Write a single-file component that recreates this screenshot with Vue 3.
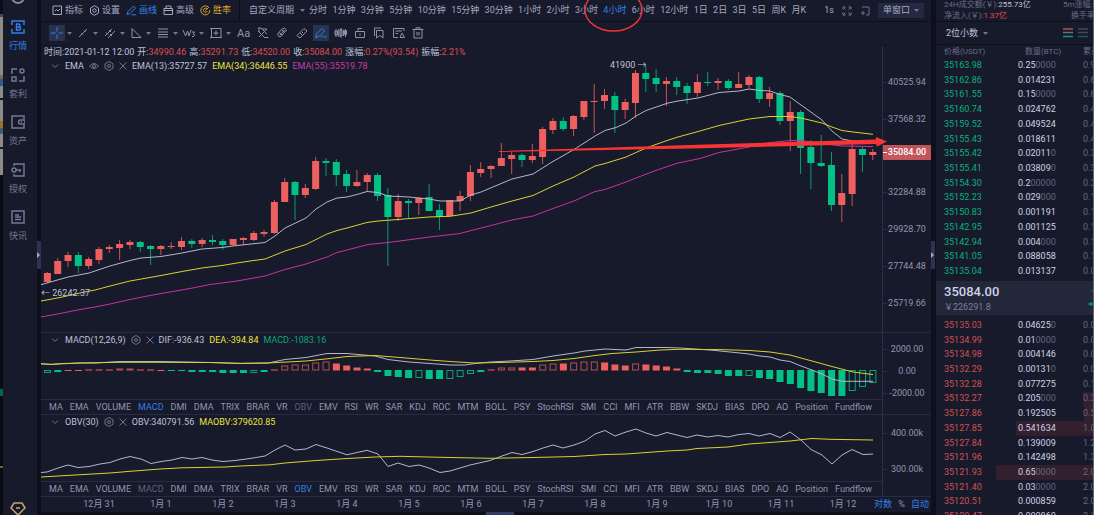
<script setup>
import { ref } from 'vue'

const FIRST = 47.4
const PITCH = 10.317
const xAt = (i) => FIRST + i * PITCH

// direction, body top, body bottom, wick top, wick bottom
const candles = [
  ['r', 273, 282, 272, 283], ['r', 261, 274, 258, 274], ['r', 255, 261, 252, 267], ['g', 255, 266, 252, 273],
  ['r', 259, 266, 257, 269], ['r', 249, 260, 247, 264], ['r', 247, 249, 245, 253], ['r', 244, 248, 240, 260],
  ['r', 242, 245, 240, 249], ['g', 242, 247, 241, 252], ['g', 246, 249, 245, 265], ['r', 246, 249, 245, 255],
  ['r', 246, 247, 242, 249], ['r', 241, 247, 237, 250], ['g', 241, 244, 239, 248], ['r', 240, 244, 238, 247],
  ['g', 240, 242, 235, 245], ['g', 241, 245, 239, 250], ['r', 239, 245, 239, 246], ['r', 238, 240, 237, 245],
  ['r', 233, 240, 231, 241], ['r', 232, 234, 230, 237], ['r', 202, 233, 200, 234], ['r', 182, 202, 178, 202],
  ['g', 182, 195, 181, 220], ['r', 188, 195, 184, 198], ['r', 161, 189, 157, 190], ['g', 161, 163, 158, 176],
  ['g', 162, 175, 159, 186], ['g', 174, 186, 170, 192], ['r', 182, 186, 170, 187], ['r', 175, 182, 173, 191],
  ['g', 175, 196, 173, 201], ['g', 195, 217, 188, 266], ['r', 201, 217, 194, 221], ['g', 201, 203, 199, 218],
  ['r', 198, 203, 197, 215], ['g', 197, 211, 184, 211], ['g', 210, 217, 204, 230], ['r', 200, 216, 200, 216],
  ['r', 196, 201, 191, 211], ['r', 172, 196, 165, 201], ['r', 169, 173, 162, 177], ['r', 166, 169, 165, 178],
  ['r', 158, 166, 143, 166], ['r', 155, 159, 152, 174], ['g', 155, 160, 153, 167], ['r', 156, 160, 144, 163],
  ['r', 129, 157, 127, 164], ['r', 121, 130, 118, 134], ['g', 121, 129, 117, 131], ['r', 116, 129, 115, 136],
  ['r', 101, 117, 101, 120], ['r', 101, 102, 84, 133], ['r', 95, 101, 89, 109], ['g', 96, 110, 92, 133],
  ['r', 102, 110, 99, 119], ['r', 73, 103, 70, 118], ['g', 73, 79, 66, 92], ['g', 78, 84, 69, 92],
  ['r', 81, 84, 77, 106], ['g', 81, 87, 77, 95], ['g', 86, 93, 83, 104], ['r', 82, 93, 74, 97],
  ['g', 82, 83, 72, 86], ['r', 81, 83, 78, 90], ['g', 81, 88, 79, 90], ['r', 84, 88, 72, 88],
  ['r', 77, 85, 75, 88], ['g', 77, 99, 76, 103], ['r', 93, 99, 87, 107], ['g', 93, 121, 91, 125],
  ['r', 112, 121, 101, 151], ['g', 112, 148, 110, 174], ['g', 147, 163, 140, 189], ['g', 163, 166, 135, 167],
  ['g', 165, 205, 152, 211], ['r', 193, 205, 174, 222], ['r', 149, 194, 144, 206], ['g', 149, 155, 147, 172],
  ['r', 152, 155, 149, 160],
]

const ema13 = '41,284.7 47,283 68,277 89,273 110,266 130,260.5 141,258 161,256.5 182,253 202,249 222,247.5 237,245.5 265,242.5 275,236 285,228 306,218 316,209 327,202 337,198 347,197 357,194.5 367,191.5 378,192.5 388,196 409,197 429,199 440,201 460,201 471,195 481,192 512,179 533,174 552,162 574,149.5 595,136 605,130.5 616,127.5 626,123 636,116 646,110.5 668,103 678,101 698,98 719,92.5 739,91 749,89 760,90.5 770,91 780,94.5 790,97 801,105 822,120 832,131 842,139 853,141 873,142'
const ema34 = '41,301 60,297.5 80,293 95,290 110,286 130,281 161,275.5 182,271.5 202,268 222,265.5 237,263 250,261 265,259 285,251 306,244.5 316,239.5 327,234 337,230.5 347,228 367,222.5 378,221 398,219.5 429,217 450,216.3 471,213 491,207 512,201 533,195.5 553,186 574,177 595,166 605,163.5 626,157 646,148 667,140.5 678,137 700,131 719,125.5 749,119 770,116.5 790,116.5 801,118 822,123 832,127 842,130.5 853,132 873,134.3'
const ema55 = '41,317 60,313.5 80,309.5 95,307 110,304 130,299.5 150,295.5 170,292 190,288.5 210,284.5 237,281 265,276 285,269.5 306,264 327,257 337,252.5 347,250 368,244.5 388,242.5 430,237 460,233.5 471,230.5 491,225.5 512,220 533,216 553,208.5 574,201 595,191.5 605,189.5 626,182 636,178 657,170 678,163 700,158.5 719,152.5 749,147 770,142.5 790,140.5 801,140.5 822,143.5 842,146 873,146.5'

const dif = '41,363.5 51,364.5 62,363.5 80,363 95,363 120,361.5 160,361.5 210,362.5 240,363.5 268,363 285,359.5 306,357.5 327,353.5 347,353.5 375,356 388,359.5 409,362 430,363.5 450,365 465,365 475,363.5 490,362 510,361 533,359.5 553,356 574,353 585,351 605,349 626,350 636,347.5 667,347.5 680,348 710,350 740,353 749,354 760,356 770,357 780,360 790,361.5 801,366 812,370 822,374 832,379 842,381.3 873,381.3'
const dea = '41,364 51,364.3 80,363 120,362.3 160,362.3 210,362.5 240,363.3 268,363 306,361 330,358.5 347,356.5 375,355.5 400,357.5 430,360 450,361.5 475,363 500,362.5 533,361.5 553,360.5 574,358.5 595,355.5 612,353.5 636,352 660,350 680,349.3 720,349.6 750,350.5 770,352 790,355 812,361 832,366.5 853,372 873,374.5'

// signed bar height in chart units, second value marks an outlined bar
const macd = [
  [-3, 1], [-2], [-1], [-1], [1], [1], [1], [2, 1], [2, 1], [1], [1], [-1], [-1], [-1], [-2], [-2], [-2], [-3], [-3], [-3],
  [-3, 1], [-2], [1], [5, 1], [6, 1], [6, 1], [8, 1], [9, 1], [7], [5], [3], [2], [-2], [-6], [-7], [-8], [-8, 1], [-9],
  [-9], [-9, 1], [-7, 1], [-4, 1], [-2], [1], [3, 1], [3, 1], [3], [3], [6, 1], [7, 1], [7], [8, 1], [9, 1], [9, 1], [8],
  [6], [5], [7, 1], [6], [5], [4], [2], [-2], [-3], [-3], [-4], [-6], [-6], [-6, 1], [-8], [-9], [-12], [-14], [-18],
  [-21], [-23], [-26], [-26], [-21, 1], [-17, 1], [-13, 1],
]
const redUnder = new Set([2, 3, 11])
const bars = macd.map(([v, hollow], i) => {
  const red = v > 0 || redUnder.has(i)
  return { x: xAt(i) - 3.4, y: v > 0 ? 370.5 - v : 370, h: Math.abs(v), hollow: !!hollow, red }
})

const obv = '41,472.5 47,472 58,468 68,465 78,467.5 89,466.5 100,464 110,462.5 120,459 130,456.5 141,459 151,463.5 161,461.5 172,460 182,457.5 192,459 202,457.5 212,460 223,461.5 235,460.5 250,458.5 265,456 275,450 285,445 295,450 306,449 316,444.5 327,448 347,454.8 357,452.5 367,450.3 378,454 388,466.5 398,463 409,466.5 419,465 429,468 440,472.5 450,471 470,465 490,460.5 502,456 512,452.5 522,454.5 533,451.5 543,448 553,445 563,448 574,445 585,441 595,434 605,430.5 615,436 626,432 636,429 646,433 656,436 667,432.5 677,435 687,437.5 697,435 708,437 718,435.5 728,437 739,434.5 749,433.5 759,436 770,433.5 780,437.5 790,432 801,440 811,449.5 822,455 832,464 842,455 852,449.5 863,454.5 873,454'
const maobv = '41,477 75,475 110,473 130,471.3 160,469 182,467.8 225,467 240,466 270,464.8 285,463 316,460.5 347,458.5 375,457 400,456.3 440,457.3 490,458.3 533,457.5 574,456.5 605,454.5 626,454 667,451 687,450 697,448.5 728,447 749,444 770,442.5 790,441 812,438.5 830,439.3 873,440'

const periods = ['分时', '1分钟', '3分钟', '5分钟', '10分钟', '15分钟', '30分钟', '1小时', '2小时', '3小时', '4小时', '6小时', '12小时', '1日', '2日', '3日', '5日', '周K', '月K']
const period = ref('4小时')

const indicators = ['MA', 'EMA', 'VOLUME', 'MACD', 'DMI', 'DMA', 'TRIX', 'BRAR', 'VR', 'OBV', 'EMV', 'RSI', 'WR', 'SAR', 'KDJ', 'ROC', 'MTM', 'BOLL', 'PSY', 'StochRSI', 'SMI', 'CCI', 'MFI', 'ATR', 'BBW', 'SKDJ', 'BIAS', 'DPO', 'AO', 'Position', 'Fundflow']
const days = ['12月 31', '1月 1', '1月 2', '1月 3', '1月 4', '1月 5', '1月 6', '1月 7', '1月 8', '1月 9', '1月 10', '1月 11', '1月 12']

const priceTicks = ['40525.94', '37568.32', '34828.55', '32284.88', '29928.70', '27744.48', '25719.66']

const nav = [
  { name: '行情', paths: ['M5 1H1V5 M1 9V13H5 M9 1H13V5 M13 9V13H9', 'M5.500 4V10H8Q9.500 10 9.500 8.500Q9.500 7 8 7H5.500H8Q9 7 9 5.500Q9 4 7.500 4H5', 'M5 1H9 M5 13H9'] },
  { name: '套利', paths: ['M6 1H1V6', 'M1 9V13H5V9Z', 'M13 8V13H8', 'M11 1A2 2 0 1 0 11 5A2 2 0 1 0 11 1'] },
  { name: '资产', paths: ['M13 4V1H1V13H13V10', 'M14 5H9.500A2 2 0 0 0 9.500 9H14Z', 'M10 7H11'] },
  { name: '授权', paths: ['M3 3V1H13V13H3V11', 'M3 5A2 2 0 1 0 3 9A2 2 0 1 0 3 5', 'M5 7H10 M9 7V9'] },
  { name: '快讯', paths: ['M1 1H13V13H1Z', 'M4 5H8 M4 7H10 M4 9.500H10'] },
]

const menus = [
  { name: '指标', tone: '', paths: ['M1 1H9.500V9.500H1Z', 'M3 6L4.500 4.500L6 6L8 4'] },
  { name: '设置', tone: '', paths: ['M5.500 0.700L9.500 3V8L5.500 10.300L1.500 8V3Z', 'M5.500 3.800A1.700 1.700 0 1 0 5.500 7.200A1.700 1.700 0 1 0 5.500 3.800'] },
  { name: '画线', tone: 'blue', paths: ['M1 9.500L2 6.500L7.500 1L9.500 3L4 8.500Z', 'M5.500 9.800H10'] },
  { name: '高级', tone: '', paths: ['M1 3.500H9.500V9.500H1Z', 'M3 3V1H8V3', 'M1 5.500H9.500'] },
  { name: '胜率', tone: 'gold', paths: ['M8.500 2.200A4.500 4.500 0 1 0 9.800 5', 'M7 4A2 2 0 1 0 7.300 6', 'M5.300 5.500L9 2'] },
]

const drawTools = [
  { name: '十字光标', paths: ['M7 1V5.500 M7 8.500V13 M1 7H5.500 M8.500 7H13'] },
  { name: '线段', paths: ['M3 11L11 3', 'M5.500 7L7 8.500 M8 4.500L9.500 6'] },
  { name: '平行线', paths: ['M2 10L9 3 M5 12L12 5', 'M3 6.500L5 8.500 M6 4L8 6 M7 8L9 10'] },
  { name: '形状', paths: ['M3 2.500V11.500H12Z'] },
  { name: '斐波那契', paths: ['M2 3H12 M2 6H12 M2 8.500H12 M2 11H12'] },
  { name: '波浪', paths: ['M1 4L3.500 10L5.500 5L7 10L9 4', 'M10 6H12.500L11 8Q13 8 12.500 9.500Q12 11 10 10.500'] },
  { name: '测量', paths: ['M2.500 2.500H12V11.500H2.500Z M7 4.500V9.500 M4.500 7H9.500', 'M1 2.500H3 M1 11.500H3 M12 11.500H13'] },
]

const editTools = [
  { name: '笔刷', paths: ['M2 2H5L11 8 M2 5L8 11 M3 2V6 M6 3L11 3L3 11', 'M8 11.500H12.500'] },
  { name: '磁吸', paths: ['M2.500 8L7.500 2.500Q10 1.500 11.500 4L6 10.500Q3.500 12 2.500 8Z', 'M5 9L9.500 4 M4 6.500L7 9 M7 4L10 6.500'] },
  { name: '橡皮擦', paths: ['M2 9.500L9 2.500L12 5L5 12Z', 'M5 7L7.500 9.500 M7 6L8 7'] },
  { name: '连续绘制', active: true, paths: ['M1.500 11.500L2.500 8L8 2.500L10.500 5L5 10.500Z', 'M7 11.500Q8.500 8 9.500 10.500T13 9.500'] },
  { name: '隐藏', paths: ['M1 5H3.500V9H1Z M6 3.500H8V10H6Z M10.500 4.500H12.500V8.500H10.500Z', 'M2 3V11 M4.700 3V11 M7 2V12 M9.500 4V10 M11.500 3V11'] },
  { name: '锁定', paths: ['M2.500 5.500H11.500V11.500H2.500Z', 'M5 5V2.500H9', 'M7 7.500V9.500'] },
  { name: '复制', paths: ['M4.500 4.500H11V12L7.800 9.500L4.500 12Z', 'M2.500 10V2H9'] },
  { name: '模板', paths: ['M12 5V2.500H1.500V11.500H6', 'M3.500 5H10 M3.500 7.500H6', 'M8 11.500L10 7L12.500 11.500Z'] },
  { name: '删除', paths: ['M1.500 3.500H12.500 M5 3V1.800H9V3 M3 3.500V12H11V3.500', 'M6 6V9.500 M8 6V9.500'] },
]

const asks = [
  ['35163.98', '0.25', '0000', '0.9'], ['35162.86', '0.014231', '', '0.6'], ['35161.55', '0.15', '0000', '0.6'],
  ['35160.74', '0.024762', '', '0.4'], ['35159.52', '0.049524', '', '0.4'], ['35155.43', '0.018611', '', '0.4'],
  ['35155.42', '0.02011', '0', '0.3'], ['35155.41', '0.03809', '0', '0.3'], ['35154.30', '0.2', '00000', '0.3'],
  ['35152.23', '0.029', '000', '0.1'], ['35150.83', '0.001191', '', '0.1'], ['35142.95', '0.001125', '', '0.1'],
  ['35142.94', '0.004', '000', '0.1'], ['35141.05', '0.088058', '', '0.1'], ['35135.04', '0.013137', '', '0.0'],
]
const bids = [
  ['35135.03', '0.04625', '0', '0.0', 0], ['35134.99', '0.01', '0000', '0.0', 0], ['35134.98', '0.004146', '', '0.0', 0],
  ['35132.29', '0.00131', '0', '0.0', 0], ['35132.28', '0.077275', '', '0.1', 0], ['35132.27', '0.205', '000', '0.3', 8],
  ['35127.86', '0.192505', '', '0.5', 7], ['35127.85', '0.541634', '', '1.0', 50], ['35127.84', '0.139009', '', '1.2', 0],
  ['35121.96', '0.142498', '', '1.3', 0], ['35121.93', '0.65', '0000', '2.0', 62], ['35121.40', '0.03', '0000', '2.0', 0],
  ['35120.51', '0.000859', '', '2.0', 0], ['35120.47', '0.000860', '', '2.1', 0],
]
</script>

<template>
  <div class="app">
    <div class="backdrop"></div>

    <aside class="side">
      <span class="avatar"></span>
      <nav class="nav">
        <a v-for="(n, i) in nav" :key="n.name" href="#" :class="{ on: i === 0 }">
          <svg width="14" height="14" viewBox="0 0 14 14"><path v-for="p in n.paths" :key="p" :d="p" /></svg>
          <span>{{ n.name }}</span>
        </a>
      </nav>
      <svg class="gem" width="16" height="16" viewBox="0 0 16 16"><path d="M4 2H12L15 7L8 14L1 7Z M6 7H10" /></svg>
    </aside>

    <div class="gutter"><button class="grip" aria-label="展开侧栏"></button></div>

    <main class="main">
      <header class="top">
        <div class="menus">
          <button v-for="m in menus" :key="m.name" :class="m.tone">
            <svg width="11" height="11" viewBox="0 0 11 11"><path v-for="p in m.paths" :key="p" :d="p" /></svg>{{ m.name }}
          </button>
        </div>
        <label class="drop custom">
          <select aria-label="自定义周期"><option>自定义周期</option></select>
          <svg width="5" height="3" viewBox="0 0 5 3"><path d="M0 0H5L2.500 3Z" /></svg>
        </label>
        <div class="periods">
          <button v-for="p in periods" :key="p" :class="{ on: p === period }" @click="period = p">{{ p }}</button>
        </div>
        <div class="view">
          <span>1s</span>
          <button aria-label="全屏"><svg width="10" height="10" viewBox="0 0 10 10"><path d="M1 3.500V1H3.500 M6.500 1H9V3.500 M9 6.500V9H6.500 M3.500 9H1V6.500 M1 1L3.500 3.500 M9 1L6.500 3.500 M9 9L6.500 6.500 M1 9L3.500 6.500" /></svg></button>
          <button aria-label="截图"><svg width="10" height="10" viewBox="0 0 10 10"><path d="M2 1H9V9H6 M1 7H5 M3 5V9" /></svg></button>
          <label class="drop window">
            <select aria-label="窗口布局"><option>单窗口</option></select>
            <svg width="5" height="3" viewBox="0 0 5 3"><path d="M0 0H5L2.500 3Z" /></svg>
          </label>
        </div>
      </header>

      <div class="tools">
        <div class="draw">
          <button v-for="(t, i) in drawTools" :key="t.name" :aria-label="t.name" :class="{ active: i === 0 }">
            <span class="ico"><svg width="14" height="14" viewBox="0 0 14 14"><path v-for="p in t.paths" :key="p" :d="p" /></svg></span>
            <svg class="caret" width="5" height="3" viewBox="0 0 5 3"><path d="M0 0H5L2.500 3Z" /></svg>
          </button>
        </div>
        <div class="edit">
          <button class="aa">Aa</button>
          <button v-for="t in editTools" :key="t.name" :aria-label="t.name" :class="{ active: t.active }">
            <span class="ico"><svg width="14" height="14" viewBox="0 0 14 14"><path v-for="p in t.paths" :key="p" :d="p" /></svg></span>
          </button>
        </div>
      </div>

      <section class="panel price">
        <div class="plot">
          <svg class="chart" viewBox="41 46 841 286" preserveAspectRatio="none">
            <g v-for="(c, i) in candles" :key="i" :class="c[0] === 'r' ? 'red' : 'green'">
              <rect class="wick" :x="xAt(i) - 0.5" :y="c[3]" width="1" :height="c[4] - c[3]" />
              <rect :x="xAt(i) - 3.5" :y="c[1]" width="7" :height="c[2] - c[1]" />
            </g>
            <polyline class="white" :points="ema13" />
            <polyline class="yellow" :points="ema34" />
            <polyline class="pink" :points="ema55" />
          </svg>
          <div class="legends">
            <div class="ohlc">
              <span>时间:2021-01-12 12:00</span>
              <span>开:<b>34990.46</b></span><span>高:<b>35291.73</b></span><span>低:<b>34520.00</b></span>
              <span>收:<b>35084.00</b></span><span>涨幅:<b>0.27%(93.54)</b></span><span>振幅:<b>2.21%</b></span>
            </div>
            <div class="legend">
              <svg width="10" height="10" viewBox="0 0 10 10"><path d="M2 3.500L5 6.500L8 3.500" /></svg>
              <span>EMA</span>
              <svg width="10" height="10" viewBox="0 0 10 10"><path d="M0.500 5Q5 0 9.500 5Q5 10 0.500 5Z M5 3.500A1.500 1.500 0 1 0 5 6.500A1.500 1.500 0 1 0 5 3.500" /></svg>
              <svg width="10" height="10" viewBox="0 0 10 10"><path d="M5 0.500L9 2.800V7.200L5 9.500L1 7.200V2.800Z M5 3.500A1.500 1.500 0 1 0 5 6.500A1.500 1.500 0 1 0 5 3.500" /></svg>
              <svg width="8" height="8" viewBox="1 1 8 8"><path d="M1.500 1.500L8.500 8.500 M8.500 1.500L1.500 8.500" /></svg>
              <span>EMA(13):35727.57</span><span class="y">EMA(34):36446.55</span><span class="p">EMA(55):35519.78</span>
            </div>
          </div>
          <span class="mark high">41900 →</span>
          <span class="mark low">← 26242.37</span>
        </div>
        <div class="axis">
          <span v-for="t in priceTicks" :key="t">{{ t }}</span>
          <strong class="last">35084.00</strong>
        </div>
      </section>

      <section class="panel">
        <div class="col">
          <div class="plot">
            <svg class="chart" viewBox="41 333 841 66" preserveAspectRatio="none">
              <template v-for="(b, i) in bars" :key="i">
                <rect v-if="b.hollow" :class="b.red ? 'hr' : 'hg'" :x="b.x + 0.5" :y="b.y + 0.5" width="6" :height="Math.max(b.h - 1, 1)" />
                <rect v-else :class="b.red ? 'red' : 'green'" :x="b.x" :y="b.y" width="7" :height="b.h" />
              </template>
              <polyline class="white" :points="dif" />
              <polyline class="yellow" :points="dea" />
            </svg>
            <div class="legends">
              <div class="legend">
                <svg width="10" height="10" viewBox="0 0 10 10"><path d="M2 3.500L5 6.500L8 3.500" /></svg>
                <span>MACD(12,26,9)</span>
                <svg width="10" height="10" viewBox="0 0 10 10"><path d="M5 0.500L9 2.800V7.200L5 9.500L1 7.200V2.800Z M5 3.500A1.500 1.500 0 1 0 5 6.500A1.500 1.500 0 1 0 5 3.500" /></svg>
                <svg width="8" height="8" viewBox="1 1 8 8"><path d="M1.500 1.500L8.500 8.500 M8.500 1.500L1.500 8.500" /></svg>
                <span>DIF:-936.43</span><span class="y">DEA:-394.84</span><span class="g">MACD:-1083.16</span>
              </div>
            </div>
          </div>
          <div class="tabs">
            <button v-for="t in indicators" :key="t" :class="{ on: t === 'MACD', dim: t === 'OBV' }">{{ t }}</button>
          </div>
        </div>
        <div class="axis macd-axis"><span>2000.00</span><span>0.00</span><span>-2000.00</span></div>
      </section>

      <section class="panel">
        <div class="col">
          <div class="plot">
            <svg class="chart" viewBox="41 415 841 66" preserveAspectRatio="none">
              <polyline class="white" :points="obv" />
              <polyline class="yellow" :points="maobv" />
            </svg>
            <div class="legends">
              <div class="legend">
                <svg width="10" height="10" viewBox="0 0 10 10"><path d="M2 3.500L5 6.500L8 3.500" /></svg>
                <span>OBV(30)</span>
                <svg width="10" height="10" viewBox="0 0 10 10"><path d="M5 0.500L9 2.800V7.200L5 9.500L1 7.200V2.800Z M5 3.500A1.500 1.500 0 1 0 5 6.500A1.500 1.500 0 1 0 5 3.500" /></svg>
                <svg width="8" height="8" viewBox="1 1 8 8"><path d="M1.500 1.500L8.500 8.500 M8.500 1.500L1.500 8.500" /></svg>
                <span>OBV:340791.56</span><span class="y">MAOBV:379620.85</span>
              </div>
            </div>
          </div>
          <div class="tabs">
            <button v-for="t in indicators" :key="t" :class="{ on: t === 'OBV', dim: t === 'MACD' }">{{ t }}</button>
          </div>
        </div>
        <div class="axis obv-axis"><span>400.00k</span><span>300.00k</span></div>
      </section>

      <footer class="time">
        <div class="days"><span v-for="d in days" :key="d">{{ d }}</span></div>
        <div class="scale"><button class="on">对数</button><button>%</button><button class="on">自动</button></div>
      </footer>
      <div class="foot"><button class="pull" aria-label="展开底栏"></button></div>

      <svg class="notes" viewBox="41 0 890 515" preserveAspectRatio="none">
        <ellipse cx="613.500" cy="10" rx="28.500" ry="21" />
        <path d="M499 151L690 145L876 139.500L876 137L887 141.500L877 146.500L876 144L690 148.500L499 152Z" />
      </svg>
    </main>

    <div class="gutter"><button class="grip" aria-label="收起盘口"></button></div>

    <aside class="book">
      <dl class="stats">
        <div><dt>24H成交额(￥):</dt><dd>255.73亿</dd><dt class="more">5m涨幅:</dt></div>
        <div><dt>净流入(￥):</dt><dd class="neg">1.37亿</dd><dt class="more turn">换手率</dt></div>
      </dl>
      <div class="depth">
        <label class="drop">
          <select aria-label="小数位"><option>2位小数</option></select>
          <svg width="5" height="3" viewBox="0 0 5 3"><path d="M0 0H5L2.500 3Z" /></svg>
        </label>
        <button aria-label="全部"><svg width="10" height="10" viewBox="0 0 10 10"><path class="lr" d="M0 1H10" /><path class="ln" d="M0 4.500H10" /><path class="lg" d="M0 8.500H10" /></svg></button>
        <button aria-label="买单"><svg class="faint" width="10" height="10" viewBox="0 0 10 10"><path class="ln" d="M0 1H10 M0 4.500H10" /><path class="lg" d="M0 8.500H10" /></svg></button>
      </div>
      <table class="orders asks">
        <thead><tr><th>价格(USDT)</th><th class="qty">数量(BTC)</th><th>累计</th></tr></thead>
        <tbody>
          <tr v-for="r in asks" :key="r[0]"><td>{{ r[0] }}</td><td>{{ r[1] }}<i>{{ r[2] }}</i></td><td>{{ r[3] }}</td></tr>
        </tbody>
      </table>
      <div class="mid">
        <div><strong>35084.00</strong><span>￥226291.8</span></div>
        <svg width="5" height="24" viewBox="0 0 5 24"><path d="M4 5H5 M0 18H5 M3 16V20" /></svg>
      </div>
      <table class="orders bids" aria-label="成交盘口">
        <tbody>
          <tr v-for="r in bids" :key="r[0]" :style="{ backgroundSize: r[4] + '% 100%' }"><td>{{ r[0] }}</td><td>{{ r[1] }}<i>{{ r[2] }}</i></td><td>{{ r[3] }}</td></tr>
        </tbody>
      </table>
    </aside>
  </div>
</template>

<style>
body { margin: 0; background: #0d0f1a; overflow: hidden; }
</style>

<style scoped>
* { box-sizing: border-box; }
.app {
  display: flex; height: 100vh; overflow: hidden; background: #0d0f1b; color: #bfc2d8;
  font: 9px/11px Roboto, "Noto Sans CJK SC", sans-serif; white-space: nowrap;
}
button, select {
  margin: 0; padding: 0; border: 0; background: none; color: inherit; font: inherit;
  appearance: none; cursor: pointer; outline: none;
}
svg { display: block; flex: none; }
path { fill: none; stroke: currentColor; stroke-width: 1; }

.backdrop {
  flex: none; width: 3px;
  background: linear-gradient(#0c0e17 0 14px, #4a4a4c 14px 17px, #8b8b88 17px 75px, #7a6a5a 75px 79px, #2a5c8e 79px 86px, #8b8b88 86px 98px, #16181e 98px 100px, #8b8b88 100px 121px, #9a7226 121px 128px, #3b5f78 128px 134px, #8b8b88 134px 147px, #16181e 147px 149px, #8b8b88 149px 175px, #0a0c14 175px 389px, #04684c 389px 396px, #0a0c14 396px 466px, #6e6530 466px 468px, #0a0c14 468px);
}

.side { display: flex; flex-direction: column; align-items: center; flex: none; width: 34px; padding-right: 4px; background: #171a2b; }
.avatar { flex: none; width: 14px; height: 14px; margin-top: -10px; border: 2px solid #85868e; border-radius: 50%; }
.nav { display: grid; grid-auto-rows: 1fr; flex: none; height: 238px; margin-top: 16px; }
.nav a { display: flex; flex-direction: column; align-items: center; gap: 7px; color: #737894; text-decoration: none; }
.nav a.on { color: #2f80e6; }
.nav path { stroke-width: 1.5; }
.gem { margin-top: auto; margin-bottom: -2px; color: #c9a273; }
.gem path { stroke-width: 1.5; }

.gutter { display: flex; align-items: center; flex: none; width: 4px; }
.grip { width: 100%; height: 28px; margin-bottom: 5px; background: #2a3350; position: relative; }
.grip::after { content: ""; position: absolute; left: 0; top: 11px; border: 3px solid transparent; border-left-color: #a3a8bf; border-right: 0; }

.main { position: relative; display: flex; flex-direction: column; flex: 1; min-width: 0; background: #171a2b; }
.top { display: flex; align-items: center; flex: none; height: 22px; border-bottom: 1px solid #0d0f1b; padding: 0 7px 0 11px; color: #a5a9c0; }
.menus { display: flex; gap: 6px; width: 188px; flex: none; align-self: stretch; border-right: 1px solid #0d0f1b; }
.menus button { display: flex; align-items: center; gap: 2px; }
.blue, .on { color: #2f80e6; }
.gold { color: #d9a335; }
.drop { display: flex; align-items: center; gap: 5px; }
.drop path, .caret path { fill: #747992; stroke: none; }
.custom { flex: none; width: 60px; margin-left: 9px; }
.periods { display: flex; justify-content: space-between; flex: 1; }
.view { display: flex; align-items: center; gap: 8px; flex: none; margin-left: 18px; }
.view button { color: #6f748d; }
.window { height: 15px; padding: 0 5px; background: #232940; gap: 3px; }

.tools { display: flex; flex: none; height: 24px; padding: 3px 8px 4px; border-bottom: 1px solid #131625; color: #8e93ad; }
.draw { display: grid; grid-template-columns: repeat(7, 1fr); width: 185px; }
.draw button { display: flex; align-items: center; gap: 2px; }
.edit { display: grid; grid-template-columns: repeat(10, 1fr); width: 194px; }
.edit button { display: flex; align-items: center; justify-content: center; }
.ico { display: grid; place-items: center; width: 16px; height: 16px; }
.active .ico { background: #283350; color: #2f80e6; }
.aa { font-size: 11px; }

.panel { display: flex; flex: none; height: 82px; border-bottom: 1px solid #272c42; }
.price { flex: 1; min-height: 0; height: auto; }
.col { display: flex; flex-direction: column; flex: 1; min-width: 0; }
.plot { position: relative; flex: 1; min-width: 0; min-height: 0; }
.chart { position: absolute; width: 100%; height: 100%; }
.legends { position: relative; }
.ohlc { display: flex; gap: 3px; height: 13px; align-items: center; padding-left: 3px; }
.ohlc b { font-weight: 400; color: #d94f52; }
.legend { display: flex; align-items: center; gap: 5px; height: 14px; padding-left: 9px; }
.legend svg { color: #6f748d; }
.y { color: #ece43c; }
.p { color: #c23ca8; }
.g { color: #0ba577; }
.mark { position: absolute; }
.high { right: 28%; top: 14px; }
.low { left: 0; bottom: 33px; }

polyline { fill: none; stroke-width: 1; }
.white { stroke: #b4b7cc; }
.yellow { stroke: #d9d12f; }
.pink { stroke: #c4349f; }
rect.red, .red rect { fill: #ee605e; }
rect.green, .green rect { fill: #03c087; }
.red .wick { fill: #c75455; }
.green .wick { fill: #0a9a70; }
.hr { fill: none; stroke: #b54e52; }
.hg { fill: none; stroke: #07a576; }

.axis { position: relative; display: grid; flex: none; width: 49px; border-left: 1px solid #2b3048; color: #9195ad; text-align: center; align-content: start; }
.axis span { display: flex; align-items: center; justify-content: center; }
.axis span::before { content: ""; position: absolute; left: 0; width: 4px; border-top: 1px solid #2b3048; }
.price .axis { grid-template-rows: repeat(7, 1fr); padding: 18px 0 10px; align-content: stretch; }
.last { position: absolute; left: 0; right: 0; top: 99px; height: 15px; line-height: 15px; background: rgba(208, 88, 91, 0.93); color: #fff; font-weight: 500; }
.last::before { content: ""; position: absolute; left: 0; top: 7px; width: 4px; border-top: 1px solid #fff; }
.macd-axis { grid-auto-rows: 22px; padding-top: 5px; }
.obv-axis { grid-auto-rows: 36px; }

.tabs { display: flex; justify-content: space-between; align-items: center; flex: none; height: 15px; padding: 0 10px 0 8px; border-top: 1px solid #272c42; color: #9296ae; }
.tabs .on { color: #2f80e6; }
.tabs .dim { color: #5d627b; }

.time { display: flex; align-items: center; flex: none; height: 15px; color: #9296ae; }
.days { display: grid; grid-template-columns: repeat(13, 1fr); flex: 1; padding-left: 27px; text-align: center; }
.scale { display: flex; justify-content: space-between; width: 57px; flex: none; padding-right: 2px; }
.scale .on { color: #2f80e6; }
.foot { display: flex; justify-content: center; flex: none; height: 3px; padding-left: 28px; background: #0d0f1b; }
.pull { width: 28px; height: 3px; background: #343b60; }
.notes { position: absolute; inset: 0; width: 100%; height: 100%; pointer-events: none; }
.notes ellipse { fill: none; stroke: #f13434; stroke-width: 1.5; }
.notes path { fill: #f93434; stroke: none; }

.book { flex: none; width: 158px; margin-left: 1px; overflow: hidden; background: #171a2b; border-right: 1px solid #65676f; }
.stats { height: 22px; margin: 0; border-bottom: 1px solid #0d0f1b; color: #686d88; font-size: 8px; }
.stats div { display: flex; height: 11px; padding-left: 8px; position: relative; top: -1px; }
.stats dd { margin: 0; color: #bfc2d8; }
.stats .neg { color: #e34c4f; }
.stats .more { position: absolute; left: 127px; }
.stats .turn { left: 135px; }
.depth { display: flex; align-items: center; gap: 5px; height: 23px; padding: 0 5px 0 10px; border-bottom: 1px solid #0d0f1b; }
.depth .drop { margin-right: auto; gap: 4px; }
.depth path { stroke-width: 1.5; }
.depth .lr { stroke: #c24c50; }
.depth .ln { stroke: #6a6f88; }
.depth .lg { stroke: #0b9c70; }
.faint { opacity: 0.55; }

.orders { display: block; border-spacing: 0; }
.orders thead { display: block; font-size: 8px; }
.orders tr { display: grid; grid-template-columns: 74px 65px 1fr; align-items: center; padding-left: 8px; }
.orders tbody { display: grid; grid-auto-rows: 1fr; height: 221px; }
.orders th { height: 13px; line-height: 13px; padding: 0; font-weight: 400; text-align: left; color: #686d88; }
.orders .qty { padding-left: 7px; }
.orders td { padding: 0; color: #cfd2e4; }
.orders td:first-child { color: #0cb07d; }
.orders td:last-child, .orders i { font-style: normal; color: #626780; }
.orders.bids tbody { height: 206px; }
.bids tr { background: linear-gradient(#33202f, #33202f) right / 0 100% no-repeat; }
.orders.bids td:first-child { color: #d2514f; }
.mid { display: flex; justify-content: space-between; align-items: center; height: 34px; margin: 2px 0 3px; padding-left: 8px; background: #22273a; color: #0cb07d; }
.mid div { display: flex; flex-direction: column; gap: 3px; }
.mid strong { font-size: 13px; line-height: 15px; font-weight: 500; color: #cfd2e8; }
.mid span { color: #7b8099; }
</style>
